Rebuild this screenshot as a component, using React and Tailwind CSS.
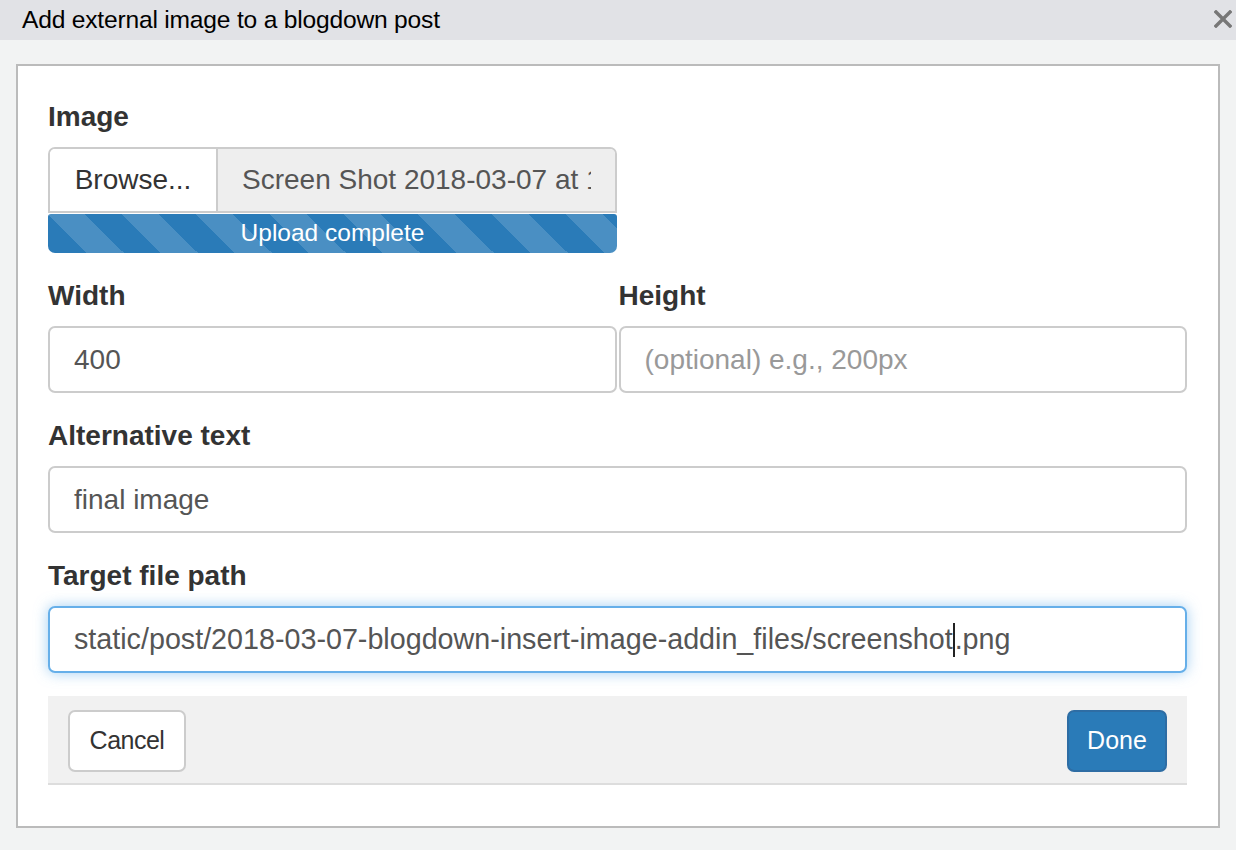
import React from 'react';

const font = { fontFamily: '"Liberation Sans", Arial, sans-serif' };

function Label({ children }) {
  return (
    <div className="text-[28px] font-bold leading-[30px] text-[#333] mb-[15px]">{children}</div>
  );
}

function TextBox({ value, placeholder, className = '' }) {
  return (
    <div
      className={`h-[67px] flex items-center px-[24px] bg-white border-2 border-[#ccc] rounded-[7px] text-[28px] ${className}`}
    >
      {value ? (
        <span className="text-[#555]">{value}</span>
      ) : (
        <span className="text-[#999]">{placeholder}</span>
      )}
    </div>
  );
}

export default function App() {
  return (
    <div className="min-h-[850px] bg-[#f2f3f3]" style={font}>
      {/* Title bar */}
      <div className="h-[40px] bg-[#e1e2e6] flex items-center justify-between pl-[22px] pr-[4px]">
        <span className="text-[24.6px] text-black tracking-[-0.2px]">
          Add external image to a blogdown post
        </span>
        <svg width="18" height="18" viewBox="0 0 18 18" className="mb-[2px]">
          <path d="M2 2 L16 16 M16 2 L2 16" stroke="#777" strokeWidth="3.4" strokeLinecap="square" />
        </svg>
      </div>

      {/* Dialog body */}
      <div className="ml-[16px] mt-[24px] w-[1204px] h-[764px] bg-white border-2 border-[#bbb] pt-[36px] pl-[30px] pr-[31px]">
        <Label>Image</Label>
        <div className="flex h-[66px] border-2 border-[#ccc] rounded-t-[7px] overflow-hidden w-[569px]">
          <div className="w-[168px] bg-white border-r-2 border-[#ccc] flex items-center justify-center text-[28px] text-[#333]">
            Browse...
          </div>
          <div className="flex-1 bg-[#eee] flex items-center pl-[24px] pr-[24px] text-[28px] text-[#555] whitespace-nowrap overflow-hidden">
            <span className="overflow-hidden">Screen Shot 2018-03-07 at 1.24.15 PM.png</span>
          </div>
        </div>
        <div className="w-[569px] h-[39px] mt-px rounded-b-[7px] rounded-t-[3px] bg-[#2a7bb8] bg-[linear-gradient(45deg,rgba(255,255,255,.15)_25%,transparent_25%,transparent_50%,rgba(255,255,255,.15)_50%,rgba(255,255,255,.15)_75%,transparent_75%,transparent)] bg-[length:74px_74px] flex items-center justify-center text-white text-[24.5px]">
          Upload complete
        </div>

        <div className="flex gap-[2px] mt-[28px]">
          <div className="w-[569px]">
            <Label>Width</Label>
            <TextBox value="400" />
          </div>
          <div className="w-[569px]">
            <Label>Height</Label>
            <TextBox placeholder="(optional) e.g., 200px" />
          </div>
        </div>

        <div className="mt-[28px]">
          <Label>Alternative text</Label>
          <TextBox value="final image" />
        </div>

        <div className="mt-[28px]">
          <Label>Target file path</Label>
          <div className="h-[67px] flex items-center px-[24px] bg-white border-2 border-[#66afe9] rounded-[7px] text-[28.7px] text-[#555] shadow-[0_0_14px_rgba(102,175,233,0.6)]">
            <span>static/post/2018-03-07-blogdown-insert-image-addin_files/screenshot</span>
            <span className="inline-block w-[2px] h-[34px] bg-[#222]" />
            <span>.png</span>
          </div>
        </div>

        <div className="mt-[23px] h-[89px] bg-[#f1f1f1] border-b-2 border-[#ddd] flex items-start justify-between pt-[14px] px-[20px]">
          <button className="h-[62px] w-[118px] bg-white border-2 border-[#ccc] rounded-[7px] text-[25px] text-[#333] tracking-[-0.5px]">
            Cancel
          </button>
          <button className="h-[62px] w-[100px] bg-[#2a7bb8] border-2 border-[#2e6da4] rounded-[7px] text-[25px] text-white">
            Done
          </button>
        </div>
      </div>
    </div>
  );
}
